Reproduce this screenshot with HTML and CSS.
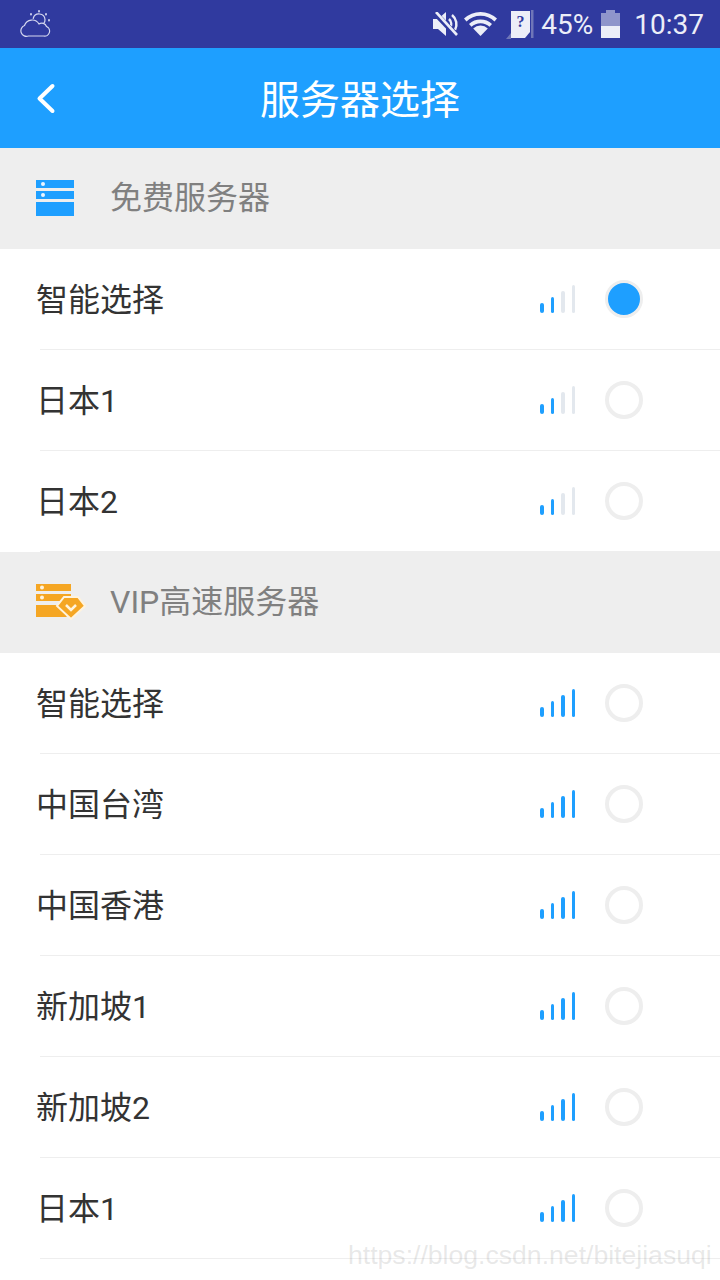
FILE: index.html
```html
<!DOCTYPE html>
<html lang="zh-CN">
<head>
    <meta charset="UTF-8">
    <meta name="viewport" content="width=device-width, initial-scale=1.0">
    <title>服务器选择</title>
    <link rel="stylesheet" href="styles.css">
</head>
<body>
    <div class="page">
        <div class="status-bar">
            <svg class="icon-weather" width="32" height="28" viewBox="0 0 32 28" fill="none" stroke="#d5d8f0" stroke-width="1.2" stroke-linecap="round">
                <path d="M8.500 26h15a5 5 0 0 0 3-9.500 5 5 0 0 0-7.500-2.500 8 8 0 0 0-14.500 1.500A5.500 5.500 0 0 0 8.500 26z"/>
                <path d="M13.200 8.500A6 6 0 0 1 25 9.500a5.500 5.500 0 0 1-1 3.500"/>
                <path d="M11 4v.5M19 1v.5M26 4v.5M29 10v.5" stroke-width="1.800"/>
            </svg>
            <div class="status-right">
                <svg class="icon-mute" width="26" height="24" viewBox="0 0 26 24" fill="#eceef8">
                    <path d="M0 7h5l8-7v24l-8-7H0z"/>
                    <path d="M16 7a7 7 0 0 1 1 9M19 3a12 12 0 0 1 3 15" fill="none" stroke="#eceef8" stroke-width="2.500"/>
                    <path d="M2 1l21 22" stroke="#303a9f" stroke-width="5.500"/>
                    <path d="M3 0l21 23" stroke="#eceef8" stroke-width="2.600"/>
                </svg>
                <svg class="icon-wifi" width="33" height="25" viewBox="0 0 33 25">
                    <path d="M0 7.500a24 24 0 0 1 33 0l-2.500 3a20 20 0 0 0-28 0z" fill="#eceef8"/>
                    <path d="M5 13a17 17 0 0 1 23 0l-2.500 2.800a13 13 0 0 0-18 0z" fill="#eceef8"/>
                    <path d="M16.500 25l-7.300-7.500a10.500 10.500 0 0 1 14.600 0z" fill="#eceef8"/>
                </svg>
                <svg class="icon-sim" width="28" height="29" viewBox="0 0 28 29">
                    <path d="M25 0h2.500v28H25z" fill="#6f76b8"/>
                    <path d="M0 29l5-6v6z" fill="#6f76b8"/>
                    <path d="M5 1h19v21l-5 6H5z" fill="#eceef8"/>
                    <text class="sim-mark" x="14.500" y="17" text-anchor="middle">?</text>
                </svg>
                <span class="battery-pct">45%</span>
                <div class="battery">
                    <div class="battery-cap"></div>
                    <div class="battery-empty"></div>
                    <div class="battery-full"></div>
                </div>
                <span class="clock">10:37</span>
            </div>
        </div>

        <div class="nav-bar">
            <svg class="icon-back" width="20" height="32" viewBox="0 0 20 32" fill="none" stroke="#fff" stroke-width="4" stroke-linecap="round" stroke-linejoin="round">
                <path d="M16.500 3L3.500 15.500 16.500 28"/>
            </svg>
            <h1>服务器选择</h1>
        </div>

        <div class="section">
            <div class="section-icon">
                <svg width="38" height="36" viewBox="0 0 38 36">
                    <rect width="38" height="8" fill="#1e9fff"/>
                    <rect y="11" width="38" height="8" fill="#1e9fff"/>
                    <rect y="22" width="38" height="14" fill="#1e9fff"/>
                    <circle cx="7" cy="4" r="2" fill="#eaf5ff"/>
                    <circle cx="7" cy="15" r="2" fill="#eaf5ff"/>
                </svg>
            </div>
            <span class="section-name">免费服务器</span>
        </div>
        <div class="row">
            <span class="row-name">智能选择</span>
            <div class="signal low"><i></i><i></i><i></i><i></i></div>
            <div class="radio on"></div>
        </div>
        <div class="row">
            <span class="row-name">日本1</span>
            <div class="signal low"><i></i><i></i><i></i><i></i></div>
            <div class="radio"></div>
        </div>
        <div class="row">
            <span class="row-name">日本2</span>
            <div class="signal low"><i></i><i></i><i></i><i></i></div>
            <div class="radio"></div>
        </div>

        <div class="section">
            <div class="section-icon">
                <svg width="50" height="36" viewBox="0 0 50 36">
                    <path d="M0 0h35v7H0zM0 10h35v7H0zM0 21h24l7 12H0z" fill="#f5a623"/>
                    <circle cx="6" cy="3.500" r="2" fill="#fff3dc"/>
                    <circle cx="6" cy="13.500" r="2" fill="#fff3dc"/>
                    <path d="M28 13h14l7 9-14 13-14-13z" fill="#f5a623" stroke="#fff3dc" stroke-width="2"/>
                    <path d="M30 21l5 5 5-5" fill="none" stroke="#fff3dc" stroke-width="2.500"/>
                </svg>
            </div>
            <span class="section-name">VIP高速服务器</span>
        </div>
        <div class="row">
            <span class="row-name">智能选择</span>
            <div class="signal"><i></i><i></i><i></i><i></i></div>
            <div class="radio"></div>
        </div>
        <div class="row">
            <span class="row-name">中国台湾</span>
            <div class="signal"><i></i><i></i><i></i><i></i></div>
            <div class="radio"></div>
        </div>
        <div class="row">
            <span class="row-name">中国香港</span>
            <div class="signal"><i></i><i></i><i></i><i></i></div>
            <div class="radio"></div>
        </div>
        <div class="row">
            <span class="row-name">新加坡1</span>
            <div class="signal"><i></i><i></i><i></i><i></i></div>
            <div class="radio"></div>
        </div>
        <div class="row">
            <span class="row-name">新加坡2</span>
            <div class="signal"><i></i><i></i><i></i><i></i></div>
            <div class="radio"></div>
        </div>
        <div class="row">
            <span class="row-name">日本1</span>
            <div class="signal"><i></i><i></i><i></i><i></i></div>
            <div class="radio"></div>
        </div>

        <div class="watermark">https://blog.csdn.net/bitejiasuqi</div>
    </div>
</body>
</html>
```

FILE: styles.css
```css
html, body { margin: 0; padding: 0; background: #fff; }
.page { position: relative; width: 720px; height: 1280px; overflow: hidden; font-family: Roboto, "Noto Sans CJK SC", sans-serif; }

.status-bar { height: 48px; background: #303a9f; display: flex; align-items: center; color: #eceef8; }
.icon-weather { margin-left: 20px; }
.status-right { margin-left: auto; display: flex; align-items: center; padding-right: 16px; }
.icon-mute { margin-right: 5px; }
.icon-wifi { margin-right: 9px; margin-top: -1px; }
.icon-sim { margin-right: 7px; }
.sim-mark { font-family: "Liberation Serif", serif; font-size: 16px; font-weight: 700; fill: #303a9f; }
.battery-pct { font-size: 28px; margin-right: 8px; }
.battery { width: 19px; display: flex; flex-direction: column; align-items: center; margin-right: 14px; margin-top: -1px; }
.battery-cap { width: 9px; height: 3px; background: #8f95cb; }
.battery-empty { width: 19px; height: 13px; background: #8f95cb; }
.battery-full { width: 19px; height: 12px; background: #eceef8; }
.clock { font-size: 28px; }

.nav-bar { height: 100px; background: #1e9fff; display: flex; align-items: center; justify-content: center; position: relative; }
.nav-bar h1 { margin: -2px 0 0; font-size: 40px; font-weight: 400; color: #fff; }
.icon-back { position: absolute; left: 36px; top: 35px; }

.section { height: 101px; background: #eee; display: flex; align-items: center; padding-left: 36px; font-size: 32px; color: #808080; }
.section-icon { width: 74px; height: 36px; margin-top: -2px; }
.section-icon svg { display: block; }
.section-name { margin-top: -8px; }

.row { height: 100px; margin-left: 40px; border-bottom: 1px solid #eee; display: flex; align-items: center; padding-right: 77px; }
.row-name { margin: -4px 0 0 -4px; font-size: 32px; color: #333; flex: 1; }

.signal { width: 35px; height: 28px; display: flex; align-items: flex-end; justify-content: space-between; margin-right: 30px; }
.signal i { display: block; width: 3.500px; border-radius: 2px; background: #1e9fff; }
.signal i:nth-child(1) { height: 10px; }
.signal i:nth-child(2) { height: 16px; }
.signal i:nth-child(3) { height: 22px; }
.signal i:nth-child(4) { height: 28px; }
.signal.low i:nth-child(3), .signal.low i:nth-child(4) { background: #e3e8ee; }

.radio { width: 38px; height: 38px; box-sizing: border-box; border: 4px solid #eee; border-radius: 50%; background: #fff; }
.radio.on { background: #1e9fff; border-width: 3px; }

.watermark { position: absolute; left: 348px; top: 1240px; font-family: "Liberation Sans", Arial, sans-serif; font-size: 26.600px; color: rgba(150, 150, 150, 0.22); white-space: nowrap; }
```
